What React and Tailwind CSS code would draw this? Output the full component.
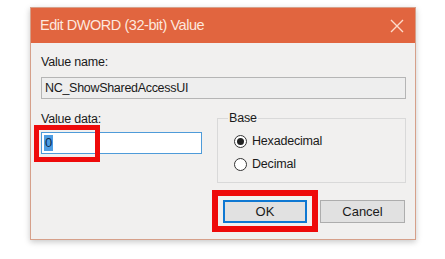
import React from 'react';

const Radio = ({ checked, label }) => (
  <div className="flex items-center h-[17px]">
    <span className="w-[13px] h-[13px] rounded-full border border-[#333] bg-white flex items-center justify-center">
      {checked && <span className="w-[7px] h-[7px] rounded-full bg-[#222]"></span>}
    </span>
    <span className="ml-[5px] text-[12.5px] text-[#1a1a1a] tracking-[-0.2px]">{label}</span>
  </div>
);

const App = () => {
  return (
    <div className="w-[445px] h-[259px] bg-white overflow-hidden font-['Liberation_Sans',Arial,sans-serif]">
      <div className="relative ml-[30px] mt-[7px] w-[386px] h-[233px] border border-[#d6a08a] shadow-[0_2px_6px_rgba(0,0,0,0.22)] flex flex-col">
        {/* title bar */}
        <div className="h-[35px] bg-[#e1653f] flex items-center justify-between pl-[9px] pr-[10px]">
          <span className="text-[14.5px] text-[#fde8de] tracking-[-0.45px]">Edit DWORD (32-bit) Value</span>
          <svg width="14" height="14" viewBox="0 0 14 14" className="mr-[1px]">
            <path d="M1 1 L13 13 M13 1 L1 13" stroke="#fcdccc" strokeWidth="1.4" />
          </svg>
        </div>

        {/* body */}
        <div className="flex-1 bg-[#f1f0ef] pl-[10px] pr-[9px] pt-[12px] text-[#1a1a1a]">
          <div className="text-[12.5px] leading-[15px] tracking-[-0.2px]">Value name:</div>
          <div className="mt-[7px] h-[22px] border border-[#b5b5b5] bg-[#eeeeee] flex items-center px-[3px] text-[12.5px] tracking-[-0.3px]">
            NC_ShowSharedAccessUI
          </div>

          <div className="flex">
            <div className="w-[161px]">
              <div className="mt-[13px] text-[12.5px] leading-[15px] tracking-[-0.2px]">Value data:</div>
              <div className="mt-[5px] h-[22px] border border-[#4e9bd9] bg-white flex items-center px-[2px]">
                <span className="bg-[#4d9de2] text-[#0b2a4d] text-[13px] leading-[16px] px-[1px]">0</span>
              </div>
            </div>
            <fieldset className="ml-auto mt-[12px] w-[189px] border border-[#d9d9d9] pl-[16px] pb-[9px]">
              <legend className="ml-[-6px] px-[1px] text-[12.5px] leading-[15px] tracking-[-0.2px]">Base</legend>
              <div className="mt-[7px] flex flex-col gap-[6px]">
                <Radio checked label="Hexadecimal" />
                <Radio label="Decimal" />
              </div>
            </fieldset>
          </div>

          <div className="mt-[17px] flex justify-end gap-[13px] pr-[1px]">
            <button className="w-[84px] h-[23px] bg-[#e1e1e1] border-2 border-[#0f78d2] text-[13px] text-[#1a1a1a]">OK</button>
            <button className="w-[85px] h-[23px] bg-[#e1e1e1] border border-[#adadad] text-[13px] text-[#1a1a1a]">Cancel</button>
          </div>
        </div>

        {/* red highlight boxes */}
        <div className="absolute left-[3px] top-[117px] w-[66px] h-[37px] border-[5px] border-[#ee0a0a]"></div>
        <div className="absolute left-[181px] top-[182px] w-[106px] h-[42px] border-[6px] border-[#ee0a0a]"></div>
      </div>
    </div>
  );
};

export default App;
